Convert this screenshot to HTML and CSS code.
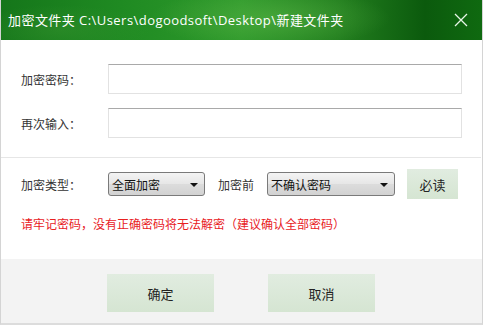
FILE: index.html
```html
<!DOCTYPE html>
<html lang="zh-CN">
<head>
<meta charset="utf-8">
<link rel="stylesheet" href="styles.css">
</head>
<body>
<div class="window">
  <div class="titlebar">
    <span class="title">加密文件夹 C:\Users\dogoodsoft\Desktop\新建文件夹</span>
    <span class="close">
      <svg width="14" height="14" viewBox="0 0 14 14"><path d="M1 1L13 13M13 1L1 13" stroke="#e8f5e8" stroke-width="1.3" fill="none"/></svg>
    </span>
  </div>
  <div class="content">
    <div class="row">
      <span class="label">加密密码：</span>
      <div class="input"></div>
    </div>
    <div class="row">
      <span class="label">再次输入：</span>
      <div class="input"></div>
    </div>
    <div class="divider"></div>
    <div class="options">
      <span class="label">加密类型：</span>
      <div class="select sel1"><span>全面加密</span><i class="arrow"></i></div>
      <span class="label2">加密前</span>
      <div class="select sel2"><span>不确认密码</span><i class="arrow"></i></div>
      <div class="btn small">必读</div>
    </div>
    <div class="warn">请牢记密码，没有正确密码将无法解密（建议确认全部密码）</div>
  </div>
  <div class="footer">
    <div class="btn big">确定</div>
    <div class="btn big">取消</div>
  </div>
</div>
</body>
</html>
```

FILE: styles.css
```css
html, body {
  margin: 0;
  padding: 0;
  background: #ffffff;
}
body {
  font-family: "Noto Sans CJK SC", "Microsoft YaHei", "Liberation Sans", sans-serif;
  font-size: 12px;
  color: #222;
}
.window {
  width: 483px;
  height: 325px;
  box-sizing: border-box;
  display: flex;
  flex-direction: column;
  border-left: 1px solid #d4d4d4;
  border-right: 1px solid #d4d4d4;
  border-bottom: 2px solid #dcdcdc;
  overflow: hidden;
}
.titlebar {
  height: 40px;
  margin: 0 -1px;
  flex: none;
  display: flex;
  align-items: center;
  justify-content: space-between;
  padding: 0 15px 0 8px;
  background:
    radial-gradient(ellipse 120px 30px at 270px 18px, rgba(90,180,70,0.55), rgba(90,180,70,0) 100%),
    radial-gradient(ellipse 90px 25px at 60px 30px, rgba(60,150,50,0.4), rgba(60,150,50,0) 100%),
    linear-gradient(90deg, #15761a 0%, #1f8a22 25%, #2f9a2c 50%, #237f1f 70%, #0b5a0d 88%, #0f6a10 100%);
  color: #ffffff;
}
.title {
  font-family: "Open Sans", "Noto Sans CJK SC", sans-serif;
  font-size: 13px;
  letter-spacing: 0.45px;
  margin-top: -1px;
}
.close {
  display: flex;
  width: 14px;
  height: 14px;
  margin-top: -1px;
}
.content {
  flex: 1;
  padding: 24px 0 0 20px;
  display: flex;
  flex-direction: column;
}
.row {
  display: flex;
  align-items: center;
  height: 30px;
  margin-bottom: 14px;
}
.row:nth-child(2) {
  margin-bottom: 19px;
}
.label {
  width: 87px;
  flex: none;
  color: #333;
}
.input {
  width: 354px;
  height: 30px;
  box-sizing: border-box;
  border: 1px solid #e2e2e2;
  border-top-color: #a9a9a9;
  background: #fff;
}
.divider {
  height: 1px;
  background: #e6e6e6;
  margin-left: -20px;
  margin-right: 1px;
}
.options {
  display: flex;
  align-items: center;
  margin-top: 11px;
  height: 30px;
}
.select {
  height: 24px;
  box-sizing: border-box;
  border: 1px solid #7a7a7a;
  border-radius: 3px;
  background: linear-gradient(#f4f4f4, #e6e6e6 50%, #dcdcdc 51%, #d2d2d2);
  display: flex;
  align-items: center;
  justify-content: space-between;
  padding: 0 6px 0 3px;
  color: #111;
}
.sel1 { width: 97px; }
.sel2 { width: 128px; }
.label2 {
  margin: 0 13px 0 13px;
  color: #333;
}
.arrow {
  width: 0;
  height: 0;
  border-left: 4px solid transparent;
  border-right: 4px solid transparent;
  border-top: 4px solid #111;
  margin-top: 1px;
}
.btn {
  display: flex;
  align-items: center;
  justify-content: center;
  background: linear-gradient(#e1ece0, #d5e5d2);
  color: #222;
}
.small {
  width: 51px;
  height: 30px;
  margin-left: 12px;
  font-size: 13px;
}
.warn {
  color: #e8211f;
  margin-top: 16px;
}
.footer {
  height: 64px;
  flex: none;
  background: #f3f3f3;
  display: flex;
  align-items: flex-start;
  padding: 15px 0 0 106px;
  gap: 54px;
  box-sizing: border-box;
}
.big {
  width: 107px;
  height: 38px;
  font-size: 13px;
}
```
